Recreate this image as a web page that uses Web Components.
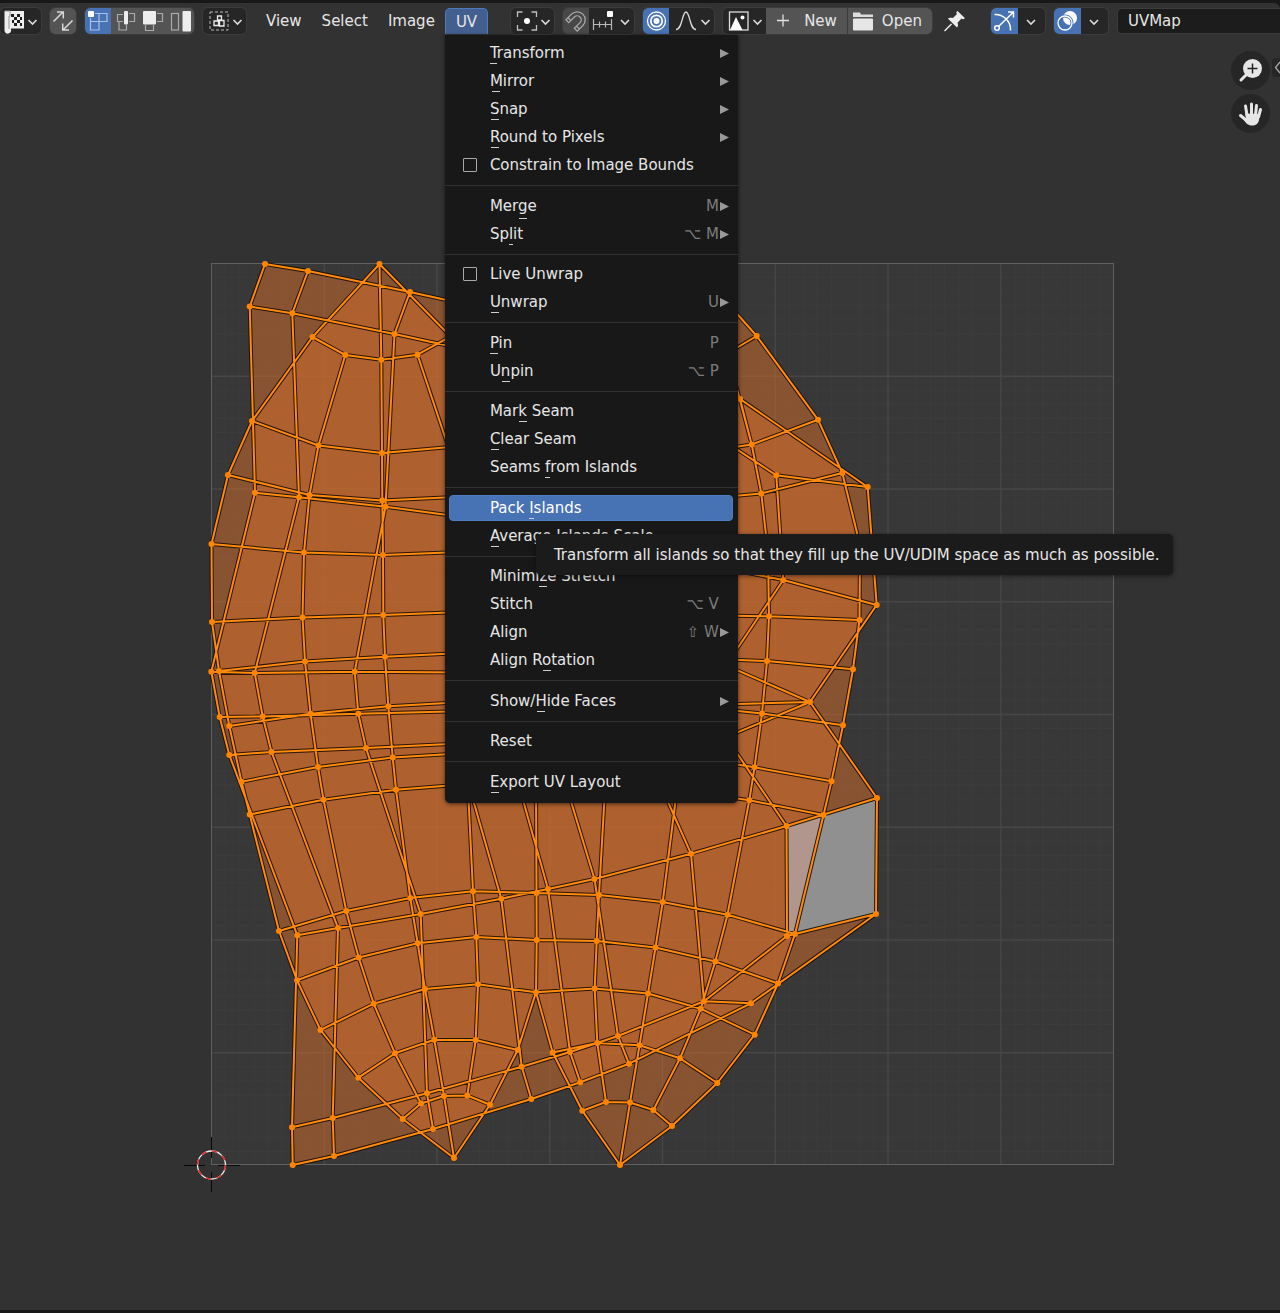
<!DOCTYPE html>
<html lang="en">
<head>
<meta charset="utf-8">
<title>UV Editor</title>
<style>
  html, body { margin: 0; background: #181818; }
  body { font: 15px/18px "DejaVu Sans", sans-serif; color: #e6e6e6; }
</style>
</head>
<body>
<uv-editor></uv-editor>
<script>
const define = (name, html) => customElements.define(name, class extends HTMLElement {
  connectedCallback() {
    if (this.shadowRoot) return;
    const root = this.attachShadow({ mode: 'open' });
    root.innerHTML = typeof html === 'function' ? html(this) : html;
  }
});

const chev = (x, y = 22) => `<path d="M${x - 4} ${y - 2}l4 4 4-4" fill="none" stroke="#dcdcdc" stroke-width="1.6"/>`;

/* Each icon: [x origin, width, drawing]; height is always 26 from y = 8 */
const ICONS = {
  editor: [0, 41, `<path d="M4.500 11H24v17.500H11v1a3 3 0 0 1-6.500 1.500V12z" fill="#eee"/><path d="M5 11h5v5h-1v13" fill="none" stroke="#999"/><g fill="#1c1c1c"><path d="M11 14h3v3h-3zM17 14h3v3h-3zM14 17h3v3h-3zM20 17h2v3h-2zM12 20h2v3h-2zM17 20h3v3h-3zM14 23h3v3h-3zM20 23h2v3h-2z"/></g>${chev(32.5)}`],
  sync: [50, 26, `<g fill="none" stroke="#d8d8d8" stroke-width="1.500"><path d="M53.500 21.500L63 12M57 12h6.300v6.500M72.500 20.500L63 30M62.700 23.500V30H69"/></g>`],
  vertex: [85, 26, `<g fill="none" stroke="#a9c2ec" stroke-width="1.200"><path d="M95 13.500h12v8H90.500V18M99 13.500v16.500h-8.500v-9"/></g><rect x="88" y="11" width="6" height="6" rx="1" fill="#fff"/>`],
  edge: [111, 28, `<g fill="none" stroke="#aaa" stroke-width="1.200"><path d="M123 14.500h-5.500v7h5.500M129 13.500h5.500v8H129M119 22v8h7.500v-5"/></g><rect x="124" y="11" width="4" height="13.500" rx="1" fill="#eee"/>`],
  face: [139, 28, `<g fill="none" stroke="#aaa" stroke-width="1.200"><path d="M157 13.500h5.500v8H157M145.500 25v5.500h8V25"/></g><rect x="143" y="11" width="13" height="13.500" rx="1" fill="#eee"/>`],
  island: [167, 27, `<rect x="171.500" y="13.500" width="7" height="16.500" fill="none" stroke="#aaa" stroke-width="1.200"/><rect x="182.500" y="11" width="8.500" height="20.500" rx="1" fill="#eee"/>`],
  sticky: [204, 43, `<rect x="211" y="12" width="18" height="18" fill="none" stroke="#bbb" stroke-dasharray="3 2"/><g fill="none" stroke="#eee" stroke-width="1.300"><path d="M218.500 16h4v4h-4zM215 21h4.500v4.500H215zM220.500 20.500h4.500V26h-4.500z"/></g>${chev(238.5)}`],
  pivot: [511, 43, `<path d="M517.500 17v-5h5M531.500 12h5v5M536.500 25v5h-5M522.500 30h-5v-5" fill="none" stroke="#c0c0c0" stroke-width="1.300"/><circle cx="527" cy="21" r="3" fill="#fff"/>${chev(545.5)}`],
  magnet: [563, 26, `<g transform="translate(576.500 20.500) rotate(45)" fill="none" stroke="#a8a8a8" stroke-width="1.300"><path d="M-8 7V-1A8 8 0 0 1 8-1V7H4V-1A4 4 0 0 0-4-1V7ZM-8 4H-4M4 4H8"/></g>`],
  snapto: [589, 45, `<path d="M593.500 19v11M611.500 19v11M599.500 21.500v6M605.500 21.500v6M593.500 24.500h18" fill="none" stroke="#b8b8b8" stroke-width="1.200"/><rect x="607" y="11" width="6" height="6" rx="1" fill="#fff"/>${chev(625)}`],
  prop: [642, 26, `<g fill="none" stroke="#fff"><circle cx="655.500" cy="21" r="9" stroke-width="1.300"/><circle cx="655.500" cy="21" r="5.700" stroke-width="1.700"/></g><circle cx="655.500" cy="21" r="3" fill="#fff"/>`],
  falloff: [668, 45, `<path d="M675 29.500c6.500 0 6-17.500 10-17.500s3.500 17.500 10 17.500" fill="none" stroke="#ddd" stroke-width="1.300"/>${chev(704.5)}`],
  image: [722, 43, `<rect x="728.500" y="12" width="18.500" height="18" fill="none" stroke="#ddd" stroke-width="1.300"/><path d="M729 30l6-13 6.500 13z" fill="#fff"/><circle cx="741.500" cy="17.500" r="2" fill="#fff"/>${chev(756.5)}`],
  plus: [773, 22, `<path d="M776 20.500h12M782 14.500v12" stroke="#e2e2e2" stroke-width="1.300"/>`],
  folder: [854, 22, `<path d="M855 12.500h7l1 2h12v2.500h-20z" fill="#ddd"/><rect x="855" y="18.500" width="20" height="12" rx="1" fill="#e6e6e6"/>`],
  pin: [942, 26, `<path d="M958.500 11c-1.500 1-1.500 2-.5 3l-4 4c-2-.5-4-.500-5 .800l9 8.700c1.300-1.200 1.200-3 .500-4.800l4-4.200c1.200 1 2.300 1 3.300-.500z" fill="#eee"/><path d="M945.500 31l7-7" stroke="#eee" stroke-width="1.500"/>`],
  gizmo: [992, 27, `<g fill="none" stroke="#fff" stroke-width="1.500"><path d="M995.500 14.500c8-.500 16.500 6 16 16M999.500 26.500L1014 12.500M1009 12h5.500v5.500"/><circle cx="998" cy="28" r="2.300"/></g>`],
  gchev: [1019, 27, chev(1032)],
  overlay: [1055, 27, `<circle cx="1071" cy="18" r="7" fill="#fff"/><circle cx="1066" cy="23" r="7" fill="none" stroke="#4772b3" stroke-width="3"/><circle cx="1066" cy="23" r="7" fill="none" stroke="#fff" stroke-width="1.300"/>`],
  ochev: [1082, 27, chev(1095)]
};

define('tool-icon', el => {
  const [x, w, art] = ICONS[el.getAttribute('name')];
  return `<style>:host{display:block;flex:none}svg{display:block}</style>
  <svg width="${w}" height="26" viewBox="${x} 8 ${w} 26" aria-hidden="true">${art}</svg>`;
});

define('tool-button', el => `
<style>
  :host { display: block; flex: none; }
  button { display: flex; align-items: center; height: 26px; margin: 0; padding: 0; border: 0; background: #262626; color: #e6e6e6; font: inherit; }
  :host([raised]) button { background: #545454; }
  :host([dim]) button { background: #484848; }
  :host([active]) button { background: #4772b3; }
  :host([plain]) button { background: none; }
  :host([text]) button { padding: 0 10px 0 8px; gap: 8px; }
  :host([divided]) button { border-left: 1px solid #3c3c3c; }
  :host([split]) button { border-left: 1px solid #3c3c3c; }
  :host([compact]) button { padding: 0 10px 0 4px; }
</style>
<button type="button" aria-label="${el.getAttribute('label')}"><tool-icon name="${el.getAttribute('icon')}"></tool-icon><slot></slot></button>`);

define('tool-group', `
<style>
  :host { display: flex; flex: none; border-radius: 5px; overflow: hidden; outline: 1px solid #3b3b3b; }
</style><slot></slot>`);

define('menu-button', el => `
<style>
  :host { display: block; flex: none; position: relative; }
  button { height: 26px; padding: 0 10px; border: 0; border-radius: 4px; background: none; color: #e6e6e6; font: inherit; }
  :host([open]) button { border: 1px solid #4d79bd; border-bottom: 0; border-radius: 5px 5px 0 0; background: #435f90; }
  .drop { position: absolute; top: 27px; left: 0; z-index: 5; }
</style>
<button type="button">${el.getAttribute('label')}</button><div class="drop"><slot></slot></div>`);

define('menu-item', el => {
  const label = el.getAttribute('label').replace(/_(.)/, (m, c) => `<span class="key${c === 'g' ? ' deep' : ''}">${c}</span>`);
  const key = el.getAttribute('key') || '';
  const box = el.hasAttribute('check');
  const tag = box ? 'label' : 'button';
  return `
<style>
  :host { display: block; position: relative; padding: 1px 5px 1px 4px; }
  :host([active]) { z-index: 2; }
  .row { box-sizing: border-box; display: flex; align-items: center; width: 100%; height: 26px; margin: 0; padding: 0 3px 0 40px; border: 1px solid transparent; border-radius: 4px; background: none; color: #e6e6e6; font: inherit; text-align: left; white-space: pre; }
  label.row { padding-left: 13px; }
  :host([active]) .row { background: #4772b3; border-color: #4f7dc4; color: #fff; }
  input { appearance: none; flex: none; box-sizing: border-box; width: 14px; height: 14px; margin: 0 13px 0 0; border: 1px solid #a8a8a8; border-radius: 1px; }
  .text { flex: 1; }
  .key { padding-bottom: 2px; background: linear-gradient(#d0d0d0, #d0d0d0) center bottom / 8px 1px no-repeat; }
  .deep { padding-bottom: 4px; }
  .short { color: #7c7c7c; }
  svg, .gap { display: block; flex: none; width: 9px; height: 9px; margin-left: 1px; }
</style>
<${tag} class="row"${box ? '' : ' type="button"'}>${box ? '<input type="checkbox">' : ''}<span class="text">${label}</span>${key ? `<span class="short">${key}</span>` : ''}${el.hasAttribute('sub') ? '<svg viewBox="0 0 9 9" aria-hidden="true"><path d="M0 0l9 4.500L0 9z" fill="#999"/></svg>' : '<span class="gap"></span>'}</${tag}><slot></slot>`;
});

define('menu-group', `
<style>
  :host { display: block; }
  :host(:not(:first-child)) { border-top: 1px solid #303030; margin-top: 6px; padding-top: 5px; }
  :host(:nth-child(even)) { padding-top: 6px; }
</style><slot></slot>`);

define('pop-menu', `
<style>
  :host { display: block; box-sizing: border-box; width: 293px; padding: 4px 0 7px; border-radius: 0 0 5px 5px; background: #181818; box-shadow: 0 1px 4px rgba(0,0,0,.6); }
</style><slot></slot>`);

define('tool-tip', `
<style>
  :host { display: block; position: absolute; top: 40px; left: 91px; padding: 12px 13px 11px 18px; border-radius: 5px; background: #1b1b1b; white-space: nowrap; box-shadow: 0 1px 4px rgba(0,0,0,.5); }
</style><slot></slot>`);

define('editor-header', `
<style>
  :host { display: flex; gap: 9px; height: 26px; padding: 5px 0 4px; background: #323232; border-radius: 0 6px 0 0; position: relative; z-index: 3; }
  nav { display: flex; margin: 0 14px 0 1px; }
  .pin { margin-right: 15px; }
  input { flex: 1 1 60px; min-width: 60px; box-sizing: border-box; height: 26px; margin: 0; padding: 0 10px; border: 1px solid #3b3b3b; border-right: 0; border-radius: 5px 0 0 5px; background: #1c1c1c; color: #e6e6e6; font: inherit; }
</style>
<tool-group><tool-button icon="editor" label="Editor type"></tool-button></tool-group>
<tool-group><tool-button icon="sync" label="Sync selection" raised></tool-button></tool-group>
<tool-group>
  <tool-button icon="vertex" label="Vertex select" active></tool-button><tool-button icon="edge" label="Edge select" raised></tool-button><tool-button icon="face" label="Face select" raised></tool-button><tool-button icon="island" label="Island select" raised></tool-button>
</tool-group>
<tool-group><tool-button icon="sticky" label="Sticky selection"></tool-button></tool-group>
<nav>
  <menu-button label="View"></menu-button>
  <menu-button label="Select"></menu-button>
  <menu-button label="Image"></menu-button>
  <menu-button label="UV" open>
    <pop-menu>
      <menu-group>
        <menu-item label="_Transform" sub></menu-item>
        <menu-item label="_Mirror" sub></menu-item>
        <menu-item label="_Snap" sub></menu-item>
        <menu-item label="_Round to Pixels" sub></menu-item>
        <menu-item label="Constrain to Image Bounds" check></menu-item>
      </menu-group>
      <menu-group>
        <menu-item label="Mer_ge" key="M" sub></menu-item>
        <menu-item label="Sp_lit" key="⌥ M" sub></menu-item>
      </menu-group>
      <menu-group>
        <menu-item label="Live Unwrap" check></menu-item>
        <menu-item label="_Unwrap" key="U" sub></menu-item>
      </menu-group>
      <menu-group>
        <menu-item label="_Pin" key="P"></menu-item>
        <menu-item label="U_npin" key="⌥ P"></menu-item>
      </menu-group>
      <menu-group>
        <menu-item label="Mar_k Seam"></menu-item>
        <menu-item label="_Clear Seam"></menu-item>
        <menu-item label="Seams _from Islands"></menu-item>
      </menu-group>
      <menu-group>
        <menu-item label="Pack _Islands" active><tool-tip role="tooltip">Transform all islands so that they fill up the UV/UDIM space as much as possible.</tool-tip></menu-item>
        <menu-item label="_Average Islands Scale"></menu-item>
      </menu-group>
      <menu-group>
        <menu-item label="Minimi_ze Stretch"></menu-item>
        <menu-item label="Stitch" key="⌥ V"></menu-item>
        <menu-item label="Align" key="⇧ W" sub></menu-item>
        <menu-item label="Align R_otation"></menu-item>
      </menu-group>
      <menu-group><menu-item label="Show/_Hide Faces" sub></menu-item></menu-group>
      <menu-group><menu-item label="Reset"></menu-item></menu-group>
      <menu-group><menu-item label="_Export UV Layout"></menu-item></menu-group>
    </pop-menu>
  </menu-button>
</nav>
<tool-group><tool-button icon="pivot" label="Pivot point"></tool-button></tool-group>
<tool-group><tool-button icon="magnet" label="Snap" dim></tool-button><tool-button icon="snapto" label="Snap to"></tool-button></tool-group>
<tool-group><tool-button icon="prop" label="Proportional editing" active></tool-button><tool-button icon="falloff" label="Falloff"></tool-button></tool-group>
<tool-group><tool-button icon="image" label="Browse image"></tool-button><tool-button icon="plus" label="New" raised text>New</tool-button><tool-button icon="folder" label="Open" raised text divided compact>Open</tool-button></tool-group>
<tool-button class="pin" icon="pin" label="Pin" plain></tool-button>
<tool-group><tool-button icon="gizmo" label="Gizmos" active></tool-button><tool-button icon="gchev" label="Gizmo options"></tool-button></tool-group>
<tool-group><tool-button icon="overlay" label="Overlays" active></tool-button><tool-button icon="ochev" label="Overlay options"></tool-button></tool-group>
<input value="UVMap" aria-label="Active UV map">`);

/* Island one: quad grid with two pointed lobes, one polyline per line of vertices */
const A_EDGES = `
379.5,264 312.5,337 252,421 228,475 211.5,544 212,622 219,671 229.3,726 241.5,781.7 249.7,814.5 279,931 297,980.3 320.5,1030 358.3,1077.7 402.7,1119 454,1158
345.3,355 318.5,445.5 309.5,495 304,552.5 302.5,617.5 305,661.5 310.5,713.7 318,767 323.5,799.7 346.3,911 358.7,957.5 373.7,1003.7 395,1053.3 421,1103.5
379.5,264 381.3,359.7 382,453 382.3,500.5 383,555 383.3,615 385,656.7 388.3,706.3 392.7,757.5 396,789.7 410.3,898 417.7,943.3 425,989 434.3,1039.7 444,1096 454,1158
417.5,354.7 450,452 455,497 460,552 468,789 473,891.3 476.3,937 478,984.3 475.7,1040 467.3,1095.5
379.5,264 455,341 536,448
536,448 536,790 536.5,893 536.7,940 536,992.3 517.7,1050 490,1104.7 454,1158
536,992.3 552.7,1052.5 582.3,1110.7 620,1165
605,789 599,895 596.7,941 594.7,988.5 597.3,1043 606,1102
677,789 662.7,902 655.5,947.5 648,993.5 639.5,1045.3 630,1102.5 620,1165
728,355 751.7,444.5 761.3,493.5 768,552.5 769,616.3 767,661 762,713.5 754.5,767.3 749.3,800.3 727.5,914.7 715.3,961.5 700.7,1008.7 680,1058.3 653.3,1110
693,264 756.7,336 818,419.7 842.3,473 860,545 859.5,620 853,669.3 843,725.3 831.5,781.3 823.5,815 795,934 778,983.5 754.7,1034.7 717.3,1083 672,1126 620,1165
312.5,337 345.3,355 381.3,359.7 417.5,354.7 455,334
728,353 756.7,336
252,421 318.5,445.5 382,453 450,447
728,448 751.7,444.5 818,419.7
228,475 309.5,495 382.3,500.5 455,497
728,496.5 761.3,493.5 842.3,473
211.5,544 304,552.5 383,555 460,552 768,552.5 860,545
212,622 302.5,617.5 383.3,615 462,612 690,615 769,616.3 859.5,620
219,671 305,661.5 385,656.7 463,653 690,658 767,661 853,669.3
229.3,726 310.5,713.7 388.3,706.3 465,702 690,706 762,713.5 843,725.3
241.5,781.7 318,767 392.7,757.5 467,753 690,757 754.5,767.3 831.5,781.3
249.7,814.5 323.5,799.7 396,789.7 468,784 680,790 749.3,800.3 823.5,815
279,931 346.3,911 410.3,898 473,891.3 536.5,893 599,895 662.7,902 727.5,914.7 795,934
297,980.3 358.7,957.5 417.7,943.3 476.3,937 536.7,940 596.7,941 655.5,947.5 715.3,961.5 778,983.5
320.5,1030 373.7,1003.7 425,989 478,984.3 536,992.3 594.7,988.5 648,993.5 700.7,1008.7 754.7,1034.7
358.3,1077.7 395,1053.3 434.3,1039.7 475.7,1040 517.7,1050
552.7,1052.5 597.3,1043 639.5,1045.3 680,1058.3 717.3,1083
402.7,1119 421,1103.5 444,1096 467.3,1095.5 490,1104.7
582.3,1110.7 606,1102 630,1102.5 653.3,1110 672,1126`;

/* Island two: the sheared strip that lies over island one */
const B_EDGES = `
265,264 308,271 410,292 560,325 740,399 867.7,487 876.7,605 810,702 877,798 876,914 751,1003.3 629,1063.7 580.3,1082.3 531.3,1099 433,1129 334,1156 292.7,1165
249.7,306.5 292.3,313.3 394.5,334 560,370 700,425 776.3,475.3 867.7,487
265,264 249.7,306.5 255,492.7 211.3,671.7 219.7,717 229.3,755 297.3,935.3 292,1127.3 292.7,1165
308,271 292.3,313.3 299,497.3 254.7,673 262.7,716.5 271.5,752 338,928 332.7,1118 334,1156
410,292 394.5,334 385.5,506.7 354.7,671.7 358.3,713.7 366,748 420.7,914 427,1093.3 433,1129
466,775 501.3,898.7 521.7,1066.7 531.3,1099
516,775 548,889 570,1052 580.3,1082.3
563,775 594.5,879 618,1036 629,1063.7
656,775 691,853.7 704,1001.3 751,1003.3
730,743 786.5,826 787,936
776.3,475.3 783.3,580 700,704
740,399 751.7,444.5
255,492.7 299,497.3 385.5,506.7 470,518 660,556 783.3,580 876.7,605
211.3,671.7 254.7,673 354.7,671.7 470,672.5
219.7,717 262.7,716.5 358.3,713.7 600,708 810,702
229.3,755 271.5,752 366,748 470,743
700,654 810,702
700,748 810,702
297.3,935.3 338,928 420.7,914 501.3,898.7 548,889 594.5,879 691,853.7 786.5,826 877,798
292,1127.3 332.7,1118 427,1093.3 521.7,1066.7 570,1052 618,1036 704,1001.3 787,936 876,914`;

const lines = t => t.trim().split('\n').map(l => 'M' + l.trim().replace(/ /g, 'L')).join('');
const dots = t => [...new Set(t.trim().split(/\s+/))].map(p => 'M' + p + 'h0').join('');
const A_FACE = 'M379.5,264 312.5,337 252,421 228,475 211.5,544 212,622 219,671 229.3,726 241.5,781.7 249.7,814.5 279,931 297,980.3 320.5,1030 358.3,1077.7 402.7,1119 454,1158 490,1104.7 517.7,1050 536,992.3 552.7,1052.5 582.3,1110.7 620,1165 672,1126 717.3,1083 754.7,1034.7 778,983.5 795,934 823.5,815 831.5,781.3 843,725.3 853,669.3 859.5,620 860,545 842.3,473 818,419.7 756.7,336 693,264 536,448 455,341z';
const B_FACE = 'M265,264 410,292 560,325 740,399 867.7,487 876.7,605 810,702 877,798 786.5,826 787,936 876,914 751,1003.3 629,1063.7 531.3,1099 433,1129 292.7,1165 292,1127.3 297.3,935.3 229.3,755 219.7,717 211.3,671.7 255,492.7 249.7,306.5z';
const gridPath = n => {
  let d = '';
  for (let i = 1; i < n; i++) {
    const s = i / n * 902;
    d += `M${(211.5 + s).toFixed(1)} 263.5V1164.500M211.500 ${(263.5 + s).toFixed(1)}H1113.500`;
  }
  return d;
};

define('uv-canvas', `
<style>
  :host { display: block; position: relative; overflow: hidden; }
  svg.scene { display: block; width: 100%; height: auto; }
</style>
<svg class="scene" viewBox="0 38 1280 1272" role="img" aria-label="UV layout">
  <rect x="211.500" y="263.500" width="902" height="901" fill="#383838"/>
  <g clip-path="url(#space)"><path d="${gridPath(64)}" stroke="#3c3c3c"/><path d="${gridPath(8)}" stroke="#464646" stroke-width="1.500"/></g>
  <clipPath id="space"><rect x="211" y="263" width="903" height="902"/></clipPath>
  <rect x="211.500" y="263.500" width="902" height="901" fill="none" stroke="#606060"/>
  <g fill="rgb(208,108,43)" fill-opacity=".53"><path d="${A_FACE}"/><path d="${B_FACE}"/></g>
  <path d="M823.5,815 877,798 876,914 795,934z" fill="#909090"/>
  <path d="M786.5,826 823.5,815 795,934 787,936z" fill="#b0968c"/>
  <g fill="none" stroke-linejoin="round">
    <path d="${lines(A_EDGES)}${lines(B_EDGES)}" stroke="#1a0d04" stroke-opacity=".9" stroke-width="4"/>
    <path d="${lines(A_EDGES)}${lines(B_EDGES)}" stroke="#ff8a0c" stroke-width="2"/>
    <path d="${dots(A_EDGES)}${dots(B_EDGES)}" stroke="#ff8500" stroke-width="6" stroke-linecap="round"/>
  </g>
  <path d="M184 1165.500h21M218 1165.500h22M211.500 1137v21M211.500 1172v20" stroke="#080808"/>
  <circle cx="211.500" cy="1165" r="14" fill="none" stroke="#eee" stroke-width="1.300"/>
  <circle cx="211.500" cy="1165" r="14" fill="none" stroke="#e02c2c" stroke-width="1.500" stroke-dasharray="5.500 5.500"/>
</svg>
<nav-controls></nav-controls>`);

define('nav-controls', `
<style>
  :host { position: absolute; top: 13px; right: 0; display: flex; align-items: flex-start; gap: 2px; }
  .stack { display: flex; flex-direction: column; gap: 4px; }
  button { display: block; margin: 0; padding: 0; border: 0; background: #262626; }
  .stack button { width: 39px; height: 39px; border-radius: 50%; }
  .tab { width: 8px; height: 19px; margin-top: 7px; border-radius: 4px 0 0 4px; }
  svg { display: block; }
</style>
<div class="stack">
  <button type="button" aria-label="Zoom"><svg width="39" height="39" viewBox="0 0 39 39"><path d="M10 29l6-6" stroke="#e6e6e6" stroke-width="3" stroke-linecap="round"/><circle cx="21.500" cy="17.500" r="9.500" fill="#e6e6e6"/><path d="M16.500 17.500h10M21.500 12.500v10" stroke="#222" stroke-width="1.500"/></svg></button>
  <button type="button" aria-label="Pan"><svg width="39" height="39" viewBox="0 0 39 39"><g stroke="#e6e6e6" stroke-width="3" stroke-linecap="round" fill="none"><path d="M16 21l-1.500-9M20.500 20V10M24.500 21l1-9.500M27.500 23l2-7.500M15 26l-5.500-4.500"/></g><path d="M14 19.500l14.500.500-.500 6c-1 4-3 5.500-7 5.500s-6-2-9-7l3-.500z" fill="#e6e6e6"/></svg></button>
</div>
<button class="tab" type="button" aria-label="Show sidebar"><svg width="8" height="19" viewBox="0 0 8 19"><path d="M8 4L3.500 9.500 8 15" fill="none" stroke="#aaa" stroke-width="1.300"/></svg></button>`);

define('uv-editor', `
<style>
  :host { display: flex; flex-direction: column; box-sizing: border-box; min-height: 100vh; padding: 3px 0; background: #181818; }
  uv-canvas { flex: 1; background: #323232; }
</style>
<editor-header></editor-header>
<uv-canvas></uv-canvas>`);
</script>
</body>
</html>
